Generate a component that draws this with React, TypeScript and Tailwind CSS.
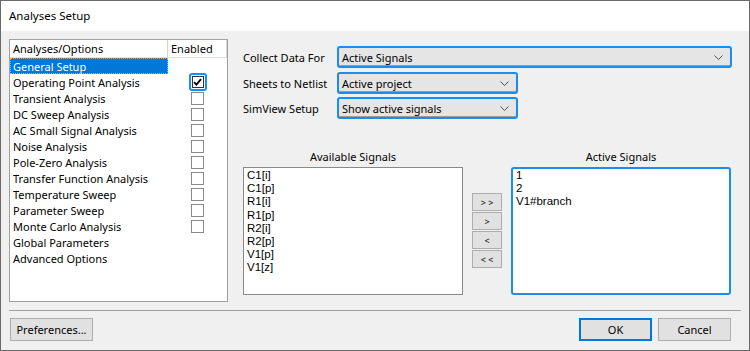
import React from 'react';

const analyses = [
  { name: 'General Setup', box: false, selected: true },
  { name: 'Operating Point Analysis', box: true, checked: true },
  { name: 'Transient Analysis', box: true },
  { name: 'DC Sweep Analysis', box: true },
  { name: 'AC Small Signal Analysis', box: true },
  { name: 'Noise Analysis', box: true },
  { name: 'Pole-Zero Analysis', box: true },
  { name: 'Transfer Function Analysis', box: true },
  { name: 'Temperature Sweep', box: true },
  { name: 'Parameter Sweep', box: true },
  { name: 'Monte Carlo Analysis', box: true },
  { name: 'Global Parameters', box: false },
  { name: 'Advanced Options', box: false },
];

const available = ['C1[i]', 'C1[p]', 'R1[i]', 'R1[p]', 'R2[i]', 'R2[p]', 'V1[p]', 'V1[z]'];
const active = ['1', '2', 'V1#branch'];
const moves = ['> >', '>', '<', '< <'];

function Chevron() {
  return (
    <svg width="9" height="5" viewBox="0 0 9 5" className="shrink-0">
      <polyline points="0.5,0.5 4.5,4.5 8.5,0.5" fill="none" stroke="#505050" strokeWidth="1" />
    </svg>
  );
}

function Select({ value, width }: { value: string; width: string }) {
  return (
    <div className={`${width} h-[22px] flex items-center justify-between pl-[3px] pr-[7px] bg-[#e5e5e5] border-2 border-[#1a8ef0] rounded-[3px] shadow-[inset_0_-1px_0_#9a9a9a]`}>
      <span>{value}</span>
      <Chevron />
    </div>
  );
}

export default function App() {
  return (
    <div className="w-[750px] h-[351px] flex flex-col border border-[#6a6a6a] bg-[#f0f0f0] text-black font-['Noto_Sans',sans-serif] text-[11px] leading-none overflow-hidden">
      <div className="h-[30px] shrink-0 bg-white flex items-center pl-[8px] pb-[1px] text-[11.5px]">Analyses Setup</div>

      <div className="flex-1 flex flex-col px-[8px] pt-[8px]">
        <div className="h-[263px] flex">
          {/* analyses list */}
          <div className="w-[219px] h-full bg-white border border-[#a0a0a0]">
            <div className="h-[18px] flex border-b border-[#e0e0e0]">
              <div className="w-[158px] pl-[3px] flex items-center border-r border-[#d5d5d5]">Analyses/Options</div>
              <div className="w-[59px] pl-[3px] flex items-center border-r border-[#d5d5d5]">Enabled</div>
            </div>
            {analyses.map(a => (
              <div key={a.name} className="h-[16px] flex">
                <div
                  className={
                    a.selected
                      ? 'w-[158px] flex items-center pl-[2px] bg-[#0078d7] text-white border border-dotted border-[#f2a444]'
                      : 'w-[158px] flex items-center pl-[3px]'
                  }
                >
                  {a.name}
                </div>
                <div className="w-[59px] flex items-center justify-center">
                  {a.box &&
                    (a.checked ? (
                      <div className="w-[18px] h-[18px] flex items-center justify-center border-2 border-[#1a8ef0] rounded-[3px]">
                        <div className="w-[12px] h-[12px] bg-white border border-[#333] flex items-center justify-center">
                          <svg width="9" height="8" viewBox="0 0 9 8">
                            <path d="M1 4.2 L3.4 6.6 L8 1.2" fill="none" stroke="#000" strokeWidth="1.8" />
                          </svg>
                        </div>
                      </div>
                    ) : (
                      <div className="w-[13px] h-[13px] bg-white border border-[#8a8a8a]" />
                    ))}
                </div>
              </div>
            ))}
          </div>

          {/* settings */}
          <div className="ml-[15px] flex flex-col">
            <div className="mt-[7px] flex items-center">
              <span className="w-[94px]">Collect Data For</span>
              <Select value="Active Signals" width="w-[395px]" />
            </div>
            <div className="mt-[4px] flex items-center">
              <span className="w-[94px]">Sheets to Netlist</span>
              <Select value="Active project" width="w-[181px]" />
            </div>
            <div className="mt-[3px] flex items-center">
              <span className="w-[94px]">SimView Setup</span>
              <Select value="Show active signals" width="w-[181px]" />
            </div>

            <div className="mt-[32px] flex items-start">
              <div className="w-[220px] flex flex-col items-center">
                <div className="h-[16px]">Available Signals</div>
                <div className="w-full h-[128px] bg-white border border-[#8a8a8a] pl-[3px] pt-[1px] font-['Liberation_Sans',sans-serif] text-[11.5px] leading-[13.2px]">
                  {available.map(s => (
                    <div key={s}>{s}</div>
                  ))}
                </div>
              </div>

              <div className="ml-[9px] mt-[42px] flex flex-col gap-[1px]">
                {moves.map(m => (
                  <div key={m} className="w-[30px] h-[18px] flex items-center justify-center bg-[#e1e1e1] border border-[#adadad] text-[9px]">
                    {m}
                  </div>
                ))}
              </div>

              <div className="ml-[9px] w-[220px] flex flex-col items-center">
                <div className="h-[16px]">Active Signals</div>
                <div className="w-full h-[128px] bg-white border-2 border-[#1a8ef0] rounded-[3px] pl-[3px] pt-0 font-['Liberation_Sans',sans-serif] text-[11.5px] leading-[13.2px]">
                  {active.map(s => (
                    <div key={s}>{s}</div>
                  ))}
                </div>
              </div>
            </div>
          </div>
        </div>

        <div className="mt-[8px] h-px bg-[#a0a0a0]" />

        <div className="mt-[7px] flex items-center pl-px pr-[10px]">
          <div className="w-[83px] h-[23px] flex items-center justify-center bg-[#e1e1e1] border border-[#adadad]">Preferences...</div>
          <div className="ml-auto w-[73px] h-[23px] flex items-center justify-center bg-[#e1e1e1] border-2 border-[#0078d7]">OK</div>
          <div className="ml-[6px] w-[73px] h-[23px] flex items-center justify-center bg-[#e1e1e1] border border-[#adadad]">Cancel</div>
        </div>
      </div>
    </div>
  );
}
